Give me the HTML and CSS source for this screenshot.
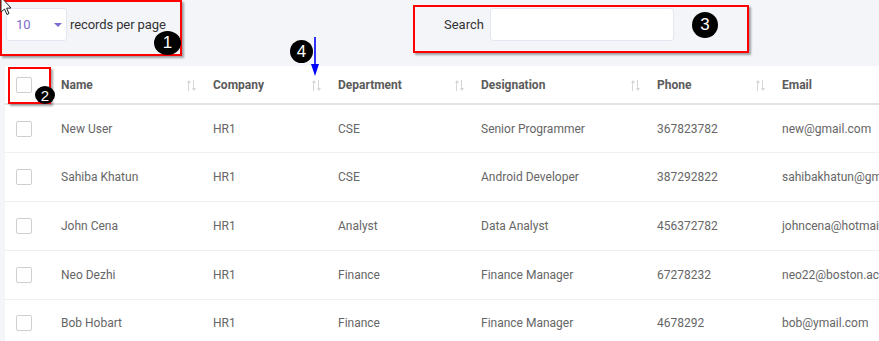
FILE: index.html
```html
<!DOCTYPE html>
<html lang="en">
<head>
    <meta charset="UTF-8">
    <title>Employees</title>
    <link rel="stylesheet" href="styles.css">
</head>
<body>
    <div class="toolbar">
        <div class="length">
            <div class="select"><span>10</span><span class="caret"></span></div>
            <span class="length-label">records per page</span>
        </div>
        <div class="search">
            <label>Search</label>
            <input type="text">
        </div>
    </div>

    <table class="grid">
        <thead>
            <tr>
                <th class="col-check"><span class="box"></span></th>
                <th class="col-name">Name<i class="sort"></i></th>
                <th class="col-company">Company<i class="sort"></i></th>
                <th class="col-dept">Department<i class="sort"></i></th>
                <th class="col-desig">Designation<i class="sort"></i></th>
                <th class="col-phone">Phone<i class="sort"></i></th>
                <th class="col-email">Email</th>
            </tr>
        </thead>
        <tbody>
            <tr><td class="col-check"><span class="box"></span></td><td>New User</td><td>HR1</td><td>CSE</td><td>Senior Programmer</td><td>367823782</td><td>new@gmail.com</td></tr>
            <tr><td class="col-check"><span class="box"></span></td><td>Sahiba Khatun</td><td>HR1</td><td>CSE</td><td>Android Developer</td><td>387292822</td><td>sahibakhatun@gmail.com</td></tr>
            <tr><td class="col-check"><span class="box"></span></td><td>John Cena</td><td>HR1</td><td>Analyst</td><td>Data Analyst</td><td>456372782</td><td>johncena@hotmail.com</td></tr>
            <tr><td class="col-check"><span class="box"></span></td><td>Neo Dezhi</td><td>HR1</td><td>Finance</td><td>Finance Manager</td><td>67278232</td><td>neo22@boston.ac.uk</td></tr>
            <tr><td class="col-check"><span class="box"></span></td><td>Bob Hobart</td><td>HR1</td><td>Finance</td><td>Finance Manager</td><td>4678292</td><td>bob@ymail.com</td></tr>
        </tbody>
    </table>

    <!-- annotations -->
    <div class="mark mark-1"></div>
    <div class="mark mark-2"></div>
    <div class="mark mark-3"></div>
    <span class="badge badge-1">1</span>
    <span class="badge badge-2">2</span>
    <span class="badge badge-3">3</span>
    <span class="badge badge-4">4</span>
    <svg class="arrow" width="12" height="40" viewBox="0 0 12 40">
        <line x1="6" y1="0" x2="6" y2="30" stroke="#0000ff" stroke-width="1.6"/>
        <polygon points="2,27 10,27 6,39" fill="#0000ff"/>
    </svg>
    <svg class="pointer" width="14" height="20" viewBox="0 0 14 20">
        <path d="M1 -3 L1 12 L4.5 9 L7 14.5 L9 13.5 L6.6 8.2 L11 8 Z" fill="#fff" stroke="#222" stroke-width="1"/>
    </svg>
</body>
</html>
```

FILE: styles.css
```css
* { box-sizing: border-box; }
body { margin: 0; background: #f4f5f9; font-family: Roboto, "Liberation Sans", sans-serif; color: #666; position: relative; overflow: hidden; height: 341px; }

.toolbar { height: 66px; display: flex; align-items: flex-start; padding-top: 8px; }
.length { display: flex; align-items: center; margin-left: 6px; width: 438px; }
.select { width: 61px; height: 33px; background: #fff; border: 1px solid #e4e6f2; border-radius: 3px; display: flex; align-items: center; padding-left: 9px; color: #7d6bd0; font-size: 13px; }
.caret { margin-left: 23px; width: 0; height: 0; border-left: 4px solid transparent; border-right: 4px solid transparent; border-top: 4px solid #7d6bd0; }
.length-label { margin-left: 3px; font-size: 13px; color: #333; letter-spacing: -0.1px; }
.search { display: flex; align-items: center; }
.search label { font-size: 13px; color: #333; margin-right: 6px; }
.search input { width: 184px; height: 33px; border: 1px solid #e4e6f2; border-radius: 3px; background: #fff; outline: none; }

.grid { margin-left: 5px; width: 900px; background: #fff; border-collapse: collapse; table-layout: fixed; font-size: 12px; }
.grid th { height: 38px; text-align: left; font-weight: 700; color: #5b5b5b; border-bottom: 2px solid #e3e3e3; padding: 0 0 0 13px; position: relative; }
.grid td { height: 48.75px; padding: 0 0 0 13px; border-bottom: 1px solid #f0f0f0; color: #666; white-space: nowrap; overflow: hidden; }
.grid th.col-check, .grid td.col-check { padding-left: 11px; }
.col-check { width: 43px; }
.col-name { width: 152px; }
.col-company { width: 125px; }
.col-dept { width: 143px; }
.col-desig { width: 176px; }
.col-phone { width: 125px; }
.col-email { width: 136px; }
.box { display: block; width: 16px; height: 16px; border: 1px solid #cfcfcf; border-radius: 2px; background: #fff; }
.sort { position: absolute; right: 4px; top: 14px; width: 10px; height: 11px;
    background:
        linear-gradient(#d6d6d6, #d6d6d6) 2px 1px / 1px 10px no-repeat,
        linear-gradient(#d6d6d6, #d6d6d6) 7px 0 / 1px 10px no-repeat; }
.sort::before, .sort::after { content: ""; position: absolute; width: 0; height: 0; border-left: 2px solid transparent; border-right: 2px solid transparent; }
.sort::before { left: 0.5px; top: 0; border-bottom: 3px solid #d6d6d6; }
.sort::after { left: 5.5px; bottom: 0; border-top: 3px solid #d6d6d6; }

.mark { position: absolute; border: 2px solid #ff0000; box-shadow: 2px 2px 2px rgba(0,0,0,0.35); }
.mark-1 { left: 0; top: 0; width: 182px; height: 56px; }
.mark-2 { left: 8px; top: 67px; width: 43px; height: 37px; }
.mark-3 { left: 413px; top: 5px; width: 336px; height: 48px; }
.badge { position: absolute; background: #000; color: #fff; border-radius: 50%; font-family: "Liberation Sans", Arial, sans-serif; font-size: 17px; display: flex; align-items: center; justify-content: center; }
.badge-1 { left: 154px; top: 31px; width: 27px; height: 24px; }
.badge-2 { left: 35px; top: 86px; width: 20px; height: 18px; font-size: 15px; }
.badge-3 { left: 692px; top: 12px; width: 26px; height: 26px; }
.badge-4 { left: 290px; top: 40px; width: 23px; height: 23px; }
.arrow { position: absolute; left: 309px; top: 37px; }
.pointer { position: absolute; left: 0; top: 0; }
```
